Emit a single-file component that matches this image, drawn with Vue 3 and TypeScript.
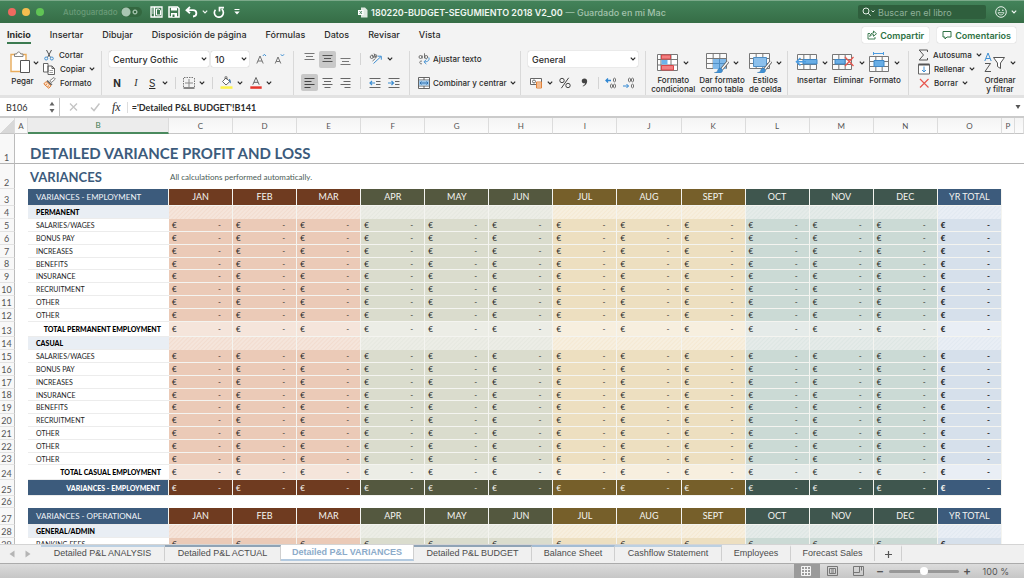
<script setup lang="ts">
import { h, ref } from 'vue'

const gridLines = (w: number, hh: number) =>
  `<path d="M.5 .5h${w}v${hh}h-${w}zM.5 ${hh / 3 + 0.5}h${w}M.5 ${(hh * 2) / 3 + 0.5}h${w}M${w / 3 + 0.5} .5v${hh}M${(w * 2) / 3 + 0.5} .5v${hh}" fill="#fbfbfb" stroke="#777"/>`
const brush =
  '<path d="M22 8.5l-6.5 8" stroke="#666" stroke-width="3" fill="none"/><path d="M22 8.5l-6.5 8" stroke="#fff" stroke-width="1.3" fill="none"/><path d="M15.5 15.5c-3-1-3.500 1-4 2.500-.4 1.200-1.500 1.500-3 1.500 3 1.500 8 1 8-2z" fill="#3f8fd2" stroke="#2b6ca8" stroke-width=".5"/>'

const icons: Record<string, [number, number, string]> = {
  layout: [13, 12, '<path d="M1 1h11v10H1zM4.500 1v10" fill="none" stroke="#fff" stroke-width="1.300"/><path d="M2.200 3h1.400M2.200 5h1.400M2.200 7h1.400" stroke="#fff"/><path d="M6.500 3h2.700l1.300 1.500V9h-4z" fill="none" stroke="#fff"/>'],
  save: [12, 12, '<path d="M1 1h8.500L11 2.500V11H1z" fill="none" stroke="#fff" stroke-width="1.500"/><path d="M3 1.500h6v3H3zM3 7h6v4H3z" fill="#fff"/><path d="M4.500 8.500h2V11h-2z" fill="#3c7850"/>'],
  undo: [13, 12, '<path d="M5 1L1.500 4.200l3.500 3M1.500 4.200H8c4.500 0 4.500 6 0 6.300" fill="none" stroke="#fff" stroke-width="1.800"/>'],
  redo: [12, 12, '<path d="M2.500 3.700A4.500 4.500 0 1 0 8.700 3.200M6.500 5.500V1.700H11" fill="none" stroke="#fff" stroke-width="1.700"/>'],
  more: [6, 8, '<path d="M.5 1.500h5" stroke="#fff"/><path d="M.3 3.500h5.400L3 6.500z" fill="#fff"/>'],
  book: [10, 11, '<path d="M3 .5h4l2.500 2.500v7.500H3z" fill="#dfe9e1"/><path d="M0 3h5.500v5H0z" fill="#fff"/><path d="M1.500 4l2.500 3M4 4L1.500 7" stroke="#3a7850" stroke-width=".8"/>'],
  search: [14, 10, '<circle cx="4" cy="4" r="3" fill="none" stroke="#e3eee6"/><path d="M6.200 6.200L8.600 8.800" stroke="#e3eee6"/><path d="M9.500 3.500l1.500 1.500 1.500-1.500" fill="none" stroke="#e3eee6"/>'],
  smile: [12, 12, '<circle cx="6" cy="6" r="5.300" fill="none" stroke="#e9f1eb"/><circle cx="4.200" cy="4.300" r=".8" fill="#e9f1eb"/><circle cx="7.800" cy="4.300" r=".8" fill="#e9f1eb"/><path d="M3 6.700c1 3 5 3 6 0z" fill="none" stroke="#e9f1eb" stroke-width=".8"/>'],
  share: [10, 10, '<path d="M3 3.500H1v5.500h7V7M2.800 6.500c.2-2.500 1.700-3.500 3.700-3.500V1l3 2.700-3 2.600V4.600c-1.500 0-2.700.4-3.700 1.900z" fill="none" stroke="#2f7245" stroke-width=".9"/>'],
  comment: [10, 10, '<path d="M1 1.500h8v5.500H5L3 9V7H1z" fill="none" stroke="#2f7245"/>'],
  paste: [21, 23, '<path d="M1 3.500h15v17H1z" fill="#fff" stroke="#e9ac5b" stroke-width="1.400"/><path d="M4.500 5.500V3h2.200c.4-2.700 3.500-2.700 4 0h2.300v2.500z" fill="#fff" stroke="#777" stroke-width=".9"/><path d="M10.500 9.500h9v12h-9z" fill="#fff" stroke="#555"/>'],
  cut: [12, 12, '<path d="M3.500 1l4 7.500M8.500 1l-4 7.500" stroke="#555" fill="none"/><circle cx="3.200" cy="9.500" r="1.500" fill="none" stroke="#3f8fd2"/><circle cx="8.800" cy="9.500" r="1.500" fill="none" stroke="#3f8fd2"/>'],
  copy: [13, 12, '<path d="M.5 .5h4.500v8.500H.5zM5 3h4l2.500 2.500v6H5zM9 3v2.500h2.500" fill="#fff" stroke="#555" stroke-width=".9"/><path d="M6.500 7.500h3.500M6.500 9.500h3.500" stroke="#777" stroke-width=".7"/>'],
  format: [13, 12, '<path d="M7 3.500l4-3 1.300 1.500-3.800 3.500z" fill="#fff" stroke="#666" stroke-width=".8"/><path d="M4.500 3l5 4.500-1.500 1L3.500 4.300z" fill="#666"/><path d="M3 4.500L.8 7l5 4.300 2.200-2.500z" fill="#fbe3cf" stroke="#e0823a"/><path d="M2.500 8l1.500-1M4.500 9.700l1.500-1" stroke="#e0823a"/>'],
  grow: [11, 12, '<path d="M.8 10.500L4 3l3.200 7.500M2 8h4" fill="none" stroke="#666" stroke-width=".9"/><path d="M6.800 3l1.600-1.700L10 3" fill="none" stroke="#3f8fd2"/>'],
  shrink: [11, 12, '<path d="M1.200 10.500L4 4l2.800 6.500M2.200 8.500h3.600" fill="none" stroke="#666" stroke-width=".9"/><path d="M6.800 1.300L8.400 3 10 1.300" fill="none" stroke="#3f8fd2"/>'],
  borders: [12, 12, '<path d="M1 .5h10M.5 1v10M11.500 1v10" stroke="#777" stroke-dasharray="1.500 1" fill="none"/><path d="M6 2v8M2 6h8" stroke="#888"/><path d="M.5 11h11" stroke="#555" stroke-width="1.400"/>'],
  fill: [13, 13, '<path d="M2.500 5.500L6 2l3.800 3.500L6 9z" fill="#fff" stroke="#555" stroke-width=".9"/><path d="M5 3V.8h2v3" fill="none" stroke="#555" stroke-width=".7"/><path d="M9 3c1.500 0 2 1.500 1.800 4.500C9.500 6.500 9 5 9 3z" fill="#3b75ad"/><path d="M.5 10.300h12v2.500H.5z" fill="#fdf34a"/>'],
  fontColor: [12, 13, '<path d="M2.800 8.700L6 1.500l3.200 7.200M4 6.300h4" fill="none" stroke="#555" stroke-width=".9"/><path d="M.3 10.300h11.400v2.500H.3z" fill="#e6352b"/>'],
  vtop: [11, 12, '<path d="M.5 .5h10M2 3.500h7M.5 6.500h10" stroke="#777"/>'],
  vmid: [11, 12, '<path d="M.5 2.500h10M2 5.500h7M.5 8.500h10" stroke="#555"/>'],
  vbot: [11, 12, '<path d="M.5 5.500h10M2 8.500h7M.5 11.500h10" stroke="#777"/>'],
  left: [11, 12, '<path d="M.5 1.500h10M.5 4.500h7M.5 7.500h10M.5 10.500h6" stroke="#444"/>'],
  center: [11, 12, '<path d="M.5 1.500h10M2 4.500h7M.5 7.500h10M2.500 10.500h6" stroke="#666"/>'],
  right: [11, 12, '<path d="M.5 1.500h10M3.500 4.500h7M.5 7.500h10M4.500 10.500h6" stroke="#666"/>'],
  orient: [14, 12, '<g fill="none" stroke="#555" stroke-width=".8"><circle cx="2.700" cy="4" r="1.500"/><path d="M3 1.500l2 3.500"/><circle cx="6.500" cy="3" r="1.400"/><path d="M5 .5l2 4M3.500 8l3-2.500"/></g><path d="M4.500 10.500L12 3.500M8.800 3.200h3.500v3.500" fill="none" stroke="#3f8fd2"/>'],
  outdent: [12, 12, '<path d="M.5 1.500h11M7 4.500h4.500M7 7.500h4.500M.5 10.500h11" stroke="#666"/><path d="M6 6H1M3 4L1 6l2 2" fill="none" stroke="#3f8fd2" stroke-width="1.200"/>'],
  indent: [12, 12, '<path d="M.5 1.500h11M7 4.500h4.500M7 7.500h4.500M.5 10.500h11" stroke="#666"/><path d="M0 6h5M3.500 4l2 2-2 2" fill="none" stroke="#3f8fd2" stroke-width="1.200"/>'],
  wrap: [12, 12, '<g fill="none" stroke="#555" stroke-width=".8"><circle cx="2.500" cy="4" r="1.500"/><path d="M4.200 2.500v3M6.500 .3v5"/><circle cx="8.200" cy="4" r="1.500"/><path d="M4 8.200c-3-1-3 3.500 0 2.500"/></g><path d="M10.800 4.500c1 3-1 4.300-4.300 4.300M8.300 6.500L6 8.800 8.300 11" fill="none" stroke="#3f8fd2"/>'],
  merge: [12, 12, '<path d="M.5 .5h11v11H.5zM.5 3h11M.5 9h11M6 .5V3M6 9v2.500" fill="#fff" stroke="#555" stroke-width=".9"/><path d="M1 3.500h10v5H1z" fill="#9cc8ee"/><path d="M2 6h8M3.500 4.500L2 6l1.500 1.500M8.500 4.500L10 6 8.500 7.500" fill="none" stroke="#2b6ca8" stroke-width=".9"/>'],
  currency: [13, 12, '<path d="M.5 1.500h11v6H.5z" fill="#fff" stroke="#666"/><circle cx="4" cy="4.500" r="1.500" fill="none" stroke="#666"/><path d="M6.500 5h5v6h-5z" fill="#fde3cb" stroke="#e0823a"/><path d="M6.500 7h5M6.500 9h5" stroke="#e0823a" stroke-width=".8"/>'],
  percent: [12, 12, '<g fill="none" stroke="#444"><circle cx="3" cy="3.500" r="2.200"/><circle cx="9" cy="8.500" r="2.200"/><path d="M9.700 .8L2.300 11.200"/></g>'],
  comma: [7, 12, '<path d="M3.500 1.500c4 0 3.500 6-1.500 8l-.4-.6C3.400 8 4 7.200 4 6.300 0 7-.5 1.500 3.500 1.500z" fill="#444"/>'],
  decInc: [12, 12, '<path d="M6 3.500H1M3 1.500l-2 2 2 2" fill="none" stroke="#2f86d2" stroke-width="1.300"/><g fill="none" stroke="#555" stroke-width=".8"><ellipse cx="9.500" cy="3" rx="1.100" ry="1.900"/><ellipse cx="6.500" cy="9" rx="1.100" ry="1.900"/><ellipse cx="9.500" cy="9" rx="1.100" ry="1.900"/></g>'],
  decDec: [12, 12, '<path d="M0 9h5.500M3.500 7l2 2-2 2" fill="none" stroke="#2f86d2" stroke-width="1"/><g fill="none" stroke="#555" stroke-width=".8"><ellipse cx="6.500" cy="3" rx="1.100" ry="1.900"/><ellipse cx="9.500" cy="3" rx="1.100" ry="1.900"/><ellipse cx="9.500" cy="9" rx="1.100" ry="1.900"/></g>'],
  cond: [22, 20, '<path d="M.5 1.500h20v16H.5zM.5 6.500h20M.5 12h20M4 1.500v16M14 1.500v16" fill="#fff" stroke="#777"/><path d="M4.500 2h9v4h-9zM4.500 12.500h12v4.500h-12z" fill="#f27f80" stroke="#d9484a"/><path d="M4.500 7h6v4.500h-6z" fill="#6db3ea"/>'],
  table: [23, 20, gridLines(20, 15) + '<path d="M7 6h13v10H7z" fill="#7fb9ea"/><path d="M7 10.500h13M13.500 6v10" stroke="#4f8ec4"/>' + brush],
  styles: [23, 20, gridLines(20, 15) + '<path d="M4.500 4.500h13v9h-13z" fill="#8cc0ec" stroke="#4f8ec4"/>' + brush],
  insert: [23, 20, '<g transform="translate(2 1)">' + gridLines(19, 15) + '</g><path d="M8 6.500h14v4.500H8z" fill="#69aee6" stroke="#3f86c4"/><path d="M11 8.700H1.500M5.500 5l-4 3.700 4 3.700" fill="none" stroke="#4b9be0" stroke-width="1.500"/>'],
  remove: [23, 20, '<g transform="translate(0 1)">' + gridLines(19, 15) + '</g><path d="M3 6.500h10v4.500H3z" fill="#69aee6" stroke="#3f86c4"/><path d="M13 4l8.500 9M21.500 4L13 13" stroke="#e8574f" stroke-width="1.300"/>'],
  formatCell: [21, 21, '<g transform="translate(0 4)">' + gridLines(19, 15) + '</g><path d="M5 8.500h10v6H5z" fill="#69aee6" stroke="#3f86c4"/><path d="M4.500 1.500h10M4.500 0v3M14.500 0v3" stroke="#4b9be0"/>'],
  sigma: [11, 12, '<path d="M9.500 3V1H1.200L5.500 6l-4.300 5h8.300V9" fill="none" stroke="#555"/>'],
  fillDown: [12, 12, '<path d="M.5 1.500h11v9.500H.5z" fill="#fff" stroke="#666"/><path d="M.5 1.500h11" stroke="#555" stroke-width="2"/><path d="M6 3.500v5.500M4 7l2 2 2-2" fill="none" stroke="#3f8fd2"/>'],
  clear: [12, 12, '<path d="M2 2l8.500 8.500M10.500 2L2 10.500" stroke="#e8574f" stroke-width="1.200"/>'],
  sort: [22, 21, '<path d="M.8 9L4 1l3.200 8M2 6.500h4" fill="none" stroke="#3f8fd2"/><path d="M1 11.500h5.500L1 19.500h6" fill="none" stroke="#555"/><path d="M9.500 5.500h11l-4 5.500v5.500l-3-2V11z" fill="#fff" stroke="#555"/>'],
  cancel: [9, 10, '<path d="M1 1.500l7 7M8 1.500l-7 7" stroke="#c4c4c4" stroke-width="1.300"/>'],
  accept: [10, 10, '<path d="M1 5.500l3 3 5.500-7" fill="none" stroke="#c4c4c4" stroke-width="1.500"/>'],
  step: [6, 12, '<path d="M.5 4.500L3 .8l2.500 3.700zM.5 8L3 11.700 5.500 8z" fill="#666"/>'],
  down: [6, 6, '<path d="M.5 1h5L3 5z" fill="#555"/>'],
  prev: [6, 8, '<path d="M5.500 .5v7L.5 4z" fill="#b4b4b4"/>'],
  next: [6, 8, '<path d="M.5 .5v7L5.500 4z" fill="#b4b4b4"/>'],
  plus: [9, 9, '<path d="M4.500 1v7M1 4.500h7" stroke="#555" stroke-width="1.200"/>'],
  viewGrid: [11, 10, '<path d="M.5 .5h9v9h-9zM.5 3.500h9M.5 6.500h9M3.500 .5v9M6.500 .5v9" fill="none" stroke="#f4f4f4"/>'],
  viewPage: [11, 10, '<path d="M.5 .5h10v9H.5z" fill="none" stroke="#777"/><path d="M2.500 2.500h6v5h-6z" fill="none" stroke="#777"/><path d="M4 4h3M4 6h3" stroke="#777"/>'],
  viewBreak: [11, 10, '<path d="M.5 .5h10v9H.5zM.5 6.500h6v-6M8.500 .5v4" fill="none" stroke="#777"/>'],
  chev: [6, 6, '<path d="M.8 1.700L3 4l2.200-2.300" fill="none" stroke="currentColor" stroke-width="1.200"/>'],
}

const Icon = (p: { name: string }) => {
  const [w, hh, body] = icons[p.name]
  return h('svg', { class: 'icon', width: w, height: hh, viewBox: `0 0 ${w} ${hh}`, 'aria-hidden': 'true', innerHTML: body })
}
Icon.props = ['name']

const menus = ['Inicio', 'Insertar', 'Dibujar', 'Disposición de página', 'Fórmulas', 'Datos', 'Revisar', 'Vista']

interface Month { letter: string; name: string; tone: string }
const months: Month[] = [
  ['C', 'JAN', 'q1'], ['D', 'FEB', 'q1'], ['E', 'MAR', 'q1'],
  ['F', 'APR', 'q2'], ['G', 'MAY', 'q2'], ['H', 'JUN', 'q2'],
  ['I', 'JUL', 'q3'], ['J', 'AUG', 'q3'], ['K', 'SEPT', 'q3'],
  ['L', 'OCT', 'q4'], ['M', 'NOV', 'q4'], ['N', 'DEC', 'q4'],
  ['O', 'YR TOTAL', 'yr'],
].map(([letter, name, tone]) => ({ letter, name, tone }))

type Kind = 'head' | 'section' | 'item' | 'item short' | 'total' | 'grand' | 'blank'
const rows: { n: number; kind: Kind; label: string }[] = (
  [
    ['head', 'VARIANCES - EMPLOYMENT'],
    ['section', 'PERMANENT'],
    ['item', 'SALARIES/WAGES'], ['item', 'BONUS PAY'], ['item', 'INCREASES'], ['item short', 'BENEFITS'],
    ['item', 'INSURANCE'], ['item', 'RECRUITMENT'], ['item', 'OTHER'], ['item', 'OTHER'],
    ['total', 'TOTAL PERMANENT EMPLOYMENT'],
    ['section', 'CASUAL'],
    ['item', 'SALARIES/WAGES'], ['item', 'BONUS PAY'], ['item', 'INCREASES'], ['item short', 'INSURANCE'],
    ['item', 'BENEFITS'], ['item', 'RECRUITMENT'], ['item', 'OTHER'], ['item', 'OTHER'], ['item short', 'OTHER'],
    ['total', 'TOTAL CASUAL EMPLOYMENT'],
    ['grand', 'VARIANCES - EMPLOYMENT'],
    ['blank', ''],
    ['head', 'VARIANCES - OPERATIONAL'],
    ['section', 'GENERAL/ADMIN'],
    ['item', 'BANKING FEES'],
  ] as [Kind, string][]
).map(([kind, label], i) => ({ n: i + 3, kind, label }))

const hasValue = (kind: Kind) => kind.startsWith('item') || kind === 'total' || kind === 'grand'

const sheets = [
  { name: 'Detailed P&L ANALYSIS', tone: 'pastel', w: 124 },
  { name: 'Detailed P&L ACTUAL', tone: 'slate', w: 116 },
  { name: 'Detailed P&L VARIANCES', tone: 'active', w: 133 },
  { name: 'Detailed P&L BUDGET', tone: 'slate', w: 118 },
  { name: 'Balance Sheet', tone: 'mid', w: 83 },
  { name: 'Cashflow Statement', tone: 'pastel', w: 107 },
  { name: 'Employees', tone: 'plain', w: 69 },
  { name: 'Forecast Sales', tone: 'plain', w: 84 },
]

const zoom = ref(50)
const formula = ref("='Detailed P&L BUDGET'!B141")
const cell = ref('B106')
</script>

<template>
  <div class="window">
    <header class="titlebar">
      <div class="title-left">
        <button class="light red" aria-label="Cerrar"></button>
        <button class="light amber" aria-label="Minimizar"></button>
        <button class="light green" aria-label="Ampliar"></button>
        <label class="autosave">Autoguardado <input type="checkbox" /></label>
        <div class="quick">
          <button aria-label="Plantillas"><Icon name="layout" /></button>
          <button aria-label="Guardar"><Icon name="save" /></button>
          <button class="pair" aria-label="Deshacer"><Icon name="undo" /><Icon name="chev" /></button>
          <button aria-label="Rehacer"><Icon name="redo" /></button>
          <button class="customize" aria-label="Personalizar"><Icon name="more" /></button>
        </div>
      </div>
      <div class="doc-name"><Icon name="book" /><span>180220-BUDGET-SEGUMIENTO 2018 V2_00</span><small>— Guardado en mi Mac</small></div>
      <div class="title-right">
        <label class="search"><Icon name="search" /><input type="text" placeholder="Buscar en el libro" aria-label="Buscar en el libro" /></label>
        <button class="pair" aria-label="Comentarios del producto"><Icon name="smile" /><Icon name="chev" /></button>
      </div>
    </header>

    <nav class="menu">
      <button v-for="(m, i) in menus" :key="m" :class="{ current: i === 0 }">{{ m }}</button>
      <div class="menu-actions">
        <button><Icon name="share" />Compartir</button>
        <button><Icon name="comment" />Comentarios</button>
      </div>
    </nav>

    <section class="ribbon">
      <div class="group clipboard">
        <div class="paste">
          <button class="pair" aria-label="Pegar"><Icon name="paste" /><Icon name="chev" /></button>
          <span>Pegar</span>
        </div>
        <div class="stack">
          <button><Icon name="cut" />Cortar</button>
          <button><Icon name="copy" />Copiar <Icon name="chev" /></button>
          <button><Icon name="format" />Formato</button>
        </div>
      </div>

      <div class="group two-rows">
        <div class="line fonts">
          <span class="drop wide"><select aria-label="Fuente"><option>Century Gothic</option></select><Icon name="chev" /></span>
          <span class="drop size"><select aria-label="Tamaño"><option>10</option></select><Icon name="chev" /></span>
          <button class="grow" aria-label="Aumentar tamaño"><Icon name="grow" /></button>
          <button class="grow" aria-label="Reducir tamaño"><Icon name="shrink" /></button>
        </div>
        <div class="line emphasis">
          <button class="letter"><b>N</b></button>
          <button class="letter"><i>I</i></button>
          <button class="letter pair"><u>S</u><Icon name="chev" /></button>
          <span class="rule"></span>
          <button class="pair" aria-label="Bordes"><Icon name="borders" /><Icon name="chev" /></button>
          <span class="rule"></span>
          <button class="pair" aria-label="Color de relleno"><Icon name="fill" /><Icon name="chev" /></button>
          <button class="pair" aria-label="Color de fuente"><Icon name="fontColor" /><Icon name="chev" /></button>
        </div>
      </div>

      <div class="group two-rows">
        <div class="line align">
          <button class="cellbtn" aria-label="Arriba"><Icon name="vtop" /></button>
          <button class="cellbtn on" aria-label="Medio"><Icon name="vmid" /></button>
          <button class="cellbtn" aria-label="Abajo"><Icon name="vbot" /></button>
          <span class="rule"></span>
          <button class="pair" aria-label="Orientación"><Icon name="orient" /><Icon name="chev" /></button>
        </div>
        <div class="line align">
          <button class="cellbtn on" aria-label="Izquierda"><Icon name="left" /></button>
          <button class="cellbtn" aria-label="Centro"><Icon name="center" /></button>
          <button class="cellbtn" aria-label="Derecha"><Icon name="right" /></button>
          <span class="rule"></span>
          <button aria-label="Reducir sangría"><Icon name="outdent" /></button>
          <button class="indent" aria-label="Aumentar sangría"><Icon name="indent" /></button>
        </div>
      </div>

      <div class="group two-rows">
        <div class="line text"><button><Icon name="wrap" />Ajustar texto</button></div>
        <div class="line text"><button><Icon name="merge" />Combinar y centrar <Icon name="chev" /></button></div>
      </div>

      <div class="group two-rows number">
        <div class="line"><span class="drop full"><select aria-label="Formato de número"><option>General</option></select><Icon name="chev" /></span></div>
        <div class="line numbers">
          <button class="pair" aria-label="Moneda"><Icon name="currency" /><Icon name="chev" /></button>
          <button aria-label="Porcentaje"><Icon name="percent" /></button>
          <button class="comma" aria-label="Millares"><Icon name="comma" /></button>
          <span class="rule"></span>
          <button aria-label="Aumentar decimales"><Icon name="decInc" /></button>
          <button aria-label="Disminuir decimales"><Icon name="decDec" /></button>
        </div>
      </div>

      <div class="group tiles">
        <button><span class="pair"><Icon name="cond" /><Icon name="chev" /></span>Formato<br />condicional</button>
        <button><span class="pair"><Icon name="table" /><Icon name="chev" /></span>Dar formato<br />como tabla</button>
        <button><span class="pair"><Icon name="styles" /><Icon name="chev" /></span>Estilos<br />de celda</button>
      </div>

      <div class="group tiles">
        <button><span class="pair"><Icon name="insert" /><Icon name="chev" /></span>Insertar</button>
        <button><span class="pair"><Icon name="remove" /><Icon name="chev" /></span>Eliminar</button>
        <button><span class="pair"><Icon name="formatCell" /><Icon name="chev" /></span>Formato</button>
      </div>

      <div class="group editing">
        <div class="stack">
          <button><Icon name="sigma" />Autosuma <Icon name="chev" /></button>
          <button><Icon name="fillDown" />Rellenar <Icon name="chev" /></button>
          <button><Icon name="clear" />Borrar <Icon name="chev" /></button>
        </div>
        <div class="tiles">
          <button><span class="pair"><Icon name="sort" /><Icon name="chev" /></span>Ordenar<br />y filtrar</button>
        </div>
      </div>
    </section>

    <div class="formula-bar">
      <div class="name-box"><input v-model="cell" type="text" aria-label="Cuadro de nombres" /><Icon name="step" /></div>
      <button aria-label="Cancelar"><Icon name="cancel" /></button>
      <button aria-label="Aceptar"><Icon name="accept" /></button>
      <button class="fx">fx</button>
      <input v-model="formula" class="formula" type="text" aria-label="Fórmula" />
      <button class="expand" aria-label="Expandir"><Icon name="down" /></button>
    </div>

    <main class="sheet">
      <table>
        <colgroup>
          <col class="c-num" /><col class="c-a" /><col class="c-b" />
          <col v-for="m in months" :key="m.letter" />
          <col class="c-a" /><col class="c-end" />
        </colgroup>
        <thead>
          <tr>
            <th class="corner"></th><th>A</th><th class="picked">B</th>
            <th v-for="m in months" :key="m.letter">{{ m.letter }}</th>
            <th>P</th><th></th>
          </tr>
        </thead>
        <tbody>
          <tr class="r-title">
            <th class="num">1</th><td></td><td class="title" colspan="16">DETAILED VARIANCE PROFIT AND LOSS</td>
          </tr>
          <tr class="r-sub">
            <th class="num">2</th><td></td><td class="subtitle">VARIANCES</td>
            <td class="note" colspan="15">All calculations performed automatically.</td>
          </tr>
          <tr v-for="r in rows" :key="r.n" :class="r.kind">
            <th class="num">{{ r.n }}</th>
            <td></td>
            <td class="label">{{ r.label }}</td>
            <td v-for="m in months" :key="m.letter" class="val" :class="m.tone">
              <template v-if="r.kind === 'head'">{{ m.name }}</template>
              <div v-else-if="hasValue(r.kind)" class="money"><span>€</span><span>-</span></div>
            </td>
            <td></td><td></td>
          </tr>
        </tbody>
      </table>
    </main>

    <nav class="tabs">
      <div class="arrows">
        <button aria-label="Anterior"><Icon name="prev" /></button>
        <button aria-label="Siguiente"><Icon name="next" /></button>
      </div>
      <button v-for="s in sheets" :key="s.name" class="tab" :class="s.tone" :style="{ flexBasis: s.w + 'px' }">{{ s.name }}</button>
      <button class="tab add" aria-label="Nueva hoja"><Icon name="plus" /></button>
    </nav>

    <footer class="status">
      <button class="view on" aria-label="Normal"><Icon name="viewGrid" /></button>
      <button class="view" aria-label="Diseño de página"><Icon name="viewPage" /></button>
      <button class="view" aria-label="Saltos de página"><Icon name="viewBreak" /></button>
      <button class="sign" aria-label="Alejar">−</button>
      <input v-model="zoom" type="range" min="0" max="100" aria-label="Zoom" />
      <button class="sign" aria-label="Acercar">+</button>
      <span class="percent">100 %</span>
    </footer>
  </div>
</template>

<style>
body {
  margin: 0;
}
</style>

<style scoped>
* {
  box-sizing: border-box;
}
.window {
  height: 100vh;
  display: flex;
  flex-direction: column;
  overflow: hidden;
  background: #f3f3f3;
  color: #2b2b2b;
  font-family: Inter, "Liberation Sans", sans-serif;
  font-size: 8px;
}
button,
input,
select {
  font: inherit;
  color: inherit;
  background: none;
  border: 0;
  padding: 0;
  margin: 0;
  outline: 0;
}
button {
  display: flex;
  align-items: center;
  justify-content: center;
  white-space: nowrap;
}
.icon {
  display: block;
  flex: none;
}
.pair {
  display: flex;
  align-items: center;
  gap: 4px;
}

/* title bar */
.titlebar {
  flex: none;
  height: 23px;
  display: grid;
  grid-template-columns: 1fr auto 1fr;
  align-items: center;
  background: linear-gradient(#43835a, #366d46);
  border-top: 1px solid #7ca98a;
  color: #f0f6f1;
}
.title-left {
  display: flex;
  align-items: center;
  gap: 6px;
  padding-left: 8px;
}
.light {
  width: 8px;
  height: 8px;
  border-radius: 50%;
}
.red { background: #ee6a5f; }
.amber { background: #f5bd4f; }
.green { background: #61c455; }
.autosave {
  display: flex;
  align-items: center;
  gap: 4px;
  margin-left: 13px;
  color: #6a9b78;
  font-size: 8px;
  font-weight: 500;
}
.autosave input {
  appearance: none;
  width: 21px;
  height: 10px;
  border-radius: 5px;
  background: radial-gradient(circle at 5px 5px, #a9c6b2 4px, transparent 5px),
    radial-gradient(circle at 14px 5px, #33673f 1px, #9cbca5 1px, #9cbca5 2px, #33673f 3px);
}
.quick {
  display: flex;
  align-items: center;
  gap: 5px;
  margin-left: 2px;
}
.customize {
  margin-left: 4px;
}
.doc-name {
  display: flex;
  align-items: center;
  gap: 3px;
  font-size: 9px;
  font-weight: 500;
}
.doc-name span {
  font-weight: 600;
}
.doc-name small {
  font-size: 9px;
  color: #a3c3ad;
}
.title-right {
  display: flex;
  justify-content: flex-end;
  align-items: center;
  gap: 9px;
  padding-right: 7px;
}
.search {
  display: flex;
  align-items: center;
  gap: 2px;
  width: 128px;
  height: 14px;
  padding: 0 4px;
  border-radius: 2px;
  background: #2f5f3d;
}
.search input {
  width: 100%;
  font-size: 9px;
}
.search input::placeholder {
  color: #8fb19a;
  opacity: 1;
}

/* menu */
.menu {
  flex: none;
  height: 24px;
  display: flex;
  align-items: center;
  gap: 19px;
  padding: 0 8px 0 7px;
  font-size: 9px;
  font-weight: 500;
}
.menu > button {
  height: 18px;
  border-bottom: 2px solid transparent;
}
.menu > .current {
  font-weight: 700;
  border-color: #3b7a50;
}
.menu-actions {
  display: flex;
  gap: 8px;
  margin-left: auto;
}
.menu-actions button {
  height: 16px;
  gap: 3px;
  padding: 0 5px;
  border-radius: 2px;
  background: #fff;
  box-shadow: 0 0 1px #aaa;
  color: #2f7245;
  font-weight: 600;
}

/* ribbon */
.ribbon {
  flex: none;
  height: 48px;
  display: grid;
  grid-template-columns: 102fr 192fr 116fr 111fr 125fr 142fr 121fr 115fr;
  padding-top: 4px;
  font-weight: 500;
}
.group {
  min-width: 0;
  border-right: 1px solid #d9d9d9;
}
.group:last-child {
  border-right: 0;
}
.clipboard {
  display: flex;
  gap: 4px;
  padding-left: 10px;
}
.paste {
  display: flex;
  flex-direction: column;
  gap: 2px;
}
.paste .pair {
  gap: 2px;
}
.paste span {
  width: 25px;
  text-align: center;
  line-height: 10px;
}
.stack {
  display: flex;
  flex-direction: column;
  margin-top: -3px;
}
.stack button {
  height: 14px;
  gap: 4px;
  justify-content: flex-start;
}
.two-rows {
  display: grid;
  grid-template-rows: 16px 17px;
  row-gap: 7px;
  align-content: start;
}
.line {
  display: flex;
  align-items: center;
}
.drop {
  position: relative;
  height: 16px;
}
.drop select {
  appearance: none;
  width: 100%;
  height: 16px;
  padding: 0 4px;
  background: #fff;
  border-radius: 2px;
  box-shadow: 0 0 1px #999;
  font-size: 9px;
}
.drop .icon {
  position: absolute;
  right: 2px;
  top: 5px;
}
.wide { width: 100px; }
.size { width: 38px; }
.full { width: 110px; }
.fonts {
  gap: 2px;
  padding-left: 7px;
}
.grow {
  margin-left: 5px;
}
.emphasis {
  gap: 7px;
  padding-left: 9px;
}
.letter {
  min-width: 12px;
  font-size: 10px;
}
.letter i {
  font-family: "Liberation Serif", serif;
}
.letter u {
  font-weight: 400;
}
.letter.pair {
  gap: 7px;
}
.rule {
  width: 1px;
  height: 12px;
  background: #d4d4d4;
}
.align {
  gap: 1px;
  padding-left: 7px;
}
.align .rule {
  margin: 0 7px 0 5px;
}
.indent {
  margin-left: 6px;
}
.cellbtn {
  width: 17px;
  height: 17px;
  border-radius: 2px;
}
.cellbtn.on {
  background: #c9c9c9;
}
.text {
  padding-left: 8px;
}
.text button {
  gap: 3px;
}
.number {
  padding-left: 7px;
}
.numbers {
  gap: 6px;
  padding-left: 2px;
}
.comma {
  margin: 0 4px;
}
.tiles {
  display: flex;
  justify-content: center;
  gap: 4px;
}
.tiles button {
  flex-direction: column;
  justify-content: flex-start;
  line-height: 9px;
}
.tiles .pair {
  height: 23px;
  margin-bottom: 2px;
}
.editing {
  display: flex;
  justify-content: space-between;
  padding: 0 8px 0 9px;
}

/* formula bar */
.formula-bar {
  flex: none;
  height: 23px;
  display: flex;
  align-items: center;
  gap: 12px;
  background: #fff;
  border-top: 3px solid #e2e2e2;
  border-bottom: 2px solid #cbcbcb;
  padding-right: 3px;
}
.name-box {
  display: flex;
  align-items: center;
  width: 60px;
  height: 18px;
  padding: 0 4px 0 6px;
  border-right: 1px solid #c4c4c4;
  font-family: Lato, sans-serif;
  font-size: 9px;
}
.name-box input {
  width: 100%;
}
.formula-bar button:nth-of-type(1) {
  margin-left: -3px;
}
.fx {
  font: italic 12px "Liberation Serif", serif;
}
.formula {
  flex: 1;
  padding-left: 4px;
  margin-left: -6px;
  border-left: 1px solid #ddd;
  font-family: Lato, sans-serif;
  font-size: 9px;
  font-weight: 700;
}

/* sheet */
.sheet {
  flex: 1;
  min-height: 0;
  overflow: hidden;
  background: #fff;
  font-family: Lato, sans-serif;
}
table {
  width: 100%;
  table-layout: fixed;
  border-collapse: separate;
  border-spacing: 0;
  line-height: 10px;
}
th,
td {
  padding: 0;
  white-space: nowrap;
}
.c-num { width: 15px; }
.c-a { width: 13px; }
.c-b { width: 141px; }
.c-end { width: 9px; }
thead th {
  height: 16px;
  font-size: 8px;
  font-weight: 400;
  color: #555;
  background: linear-gradient(#f4f4f4, #fcfcfc);
  border-right: 1px solid #dcdcdc;
  border-bottom: 1px solid #c6c6c6;
}
thead .picked {
  background: #ececec;
  color: #3b7a50;
  border-bottom: 2px solid #4a8a5e;
}
thead .corner {
  background: linear-gradient(135deg, #f6f6f6 55%, #d8d8d8 55%);
}
.num {
  padding-right: 1px;
  background: #f8f8f8;
  border-right: 1px solid #bcbcbc;
  border-bottom: 1px solid #e2e2e2;
  vertical-align: bottom;
  font-size: 9px;
  font-weight: 400;
  color: #555;
}
.r-title > * {
  height: 30px;
  border-bottom: 1px solid #b4b4b4;
}
.r-sub > * {
  height: 25px;
}
.title {
  padding: 9px 0 0 2px;
  font-size: 15px;
  line-height: 20px;
  font-weight: 700;
  color: #3c5b7c;
}
.subtitle {
  padding-left: 2px;
  font-size: 13px;
  line-height: 16px;
  font-weight: 700;
  color: #3c5b7c;
}
.note {
  padding-left: 1px;
  color: #4a5b55;
}
.label {
  padding: 0 8px;
  color: #1c1c1c;
  font-size: 7px;
  border-bottom: 1px solid #ececec;
}
.val {
  border-right: 1px solid #f4f4f0;
  border-bottom: 1px solid #f4f4f0;
}
.money {
  display: flex;
  justify-content: space-between;
  padding: 0 11px 0 3px;
}
.yr .money {
  font-weight: 900;
}
.item > * { height: 13px; }
.short > * { height: 12px; }
.section > * { height: 13px; }
.total > * { height: 15px; }
.grand > * { height: 16px; }
.blank > * { height: 12px; }
.head > * { height: 17px; }

.q1 { --dark: #6f3b20; --mid: #ebcab7; --pale: #f5e5db; --line: #f2dccf; }
.q2 { --dark: #54583f; --mid: #dadccd; --pale: #ecede6; --line: #e6e8e0; }
.q3 { --dark: #765f2a; --mid: #eddfc0; --pale: #f7efdf; --line: #f5e9d3; }
.q4 { --dark: #3f564e; --mid: #cbdad5; --pale: #e5ebe9; --line: #dde6e3; }
.yr { --dark: #3c5b7c; --mid: #d6e0eb; --pale: #e9eef5; --line: #e2e9f1; }

.item .val { background: var(--mid); }
.total .val { background: var(--pale); }
.section .val {
  background: repeating-linear-gradient(135deg, var(--pale) 0 1px, var(--line) 2px 2px, var(--pale) 3px 3px);
  border-bottom: 0;
}
.head .val,
.grand .val {
  background: var(--dark);
  color: #f4f4f0;
}
.head .val {
  text-align: center;
  font-size: 9px;
}
.head .label {
  background: #3c5b7c;
  color: #f1f4f8;
  font-size: 8px;
  border-right: 1px solid #f4f4f0;
}
.section .label {
  background: #e9eef4;
  color: #000;
  font-weight: 900;
}
.total .label,
.grand .label {
  text-align: right;
  font-weight: 900;
  color: #000;
}
.grand .label {
  background: #3c5b7c;
  color: #fff;
  border-right: 1px solid #f4f4f0;
}
.blank .val,
.blank .label {
  border: 0;
}

/* sheet tabs */
.tabs {
  flex: none;
  height: 20px;
  display: flex;
  align-items: flex-start;
  background: #f0f0f0;
  border-top: 1px solid #d4d4d4;
  border-bottom: 1px solid #ababab;
  font-family: "Liberation Sans", Arial, sans-serif;
  font-size: 9px;
  color: #4c4c4c;
}
.arrows {
  display: flex;
  gap: 10px;
  width: 41px;
  height: 18px;
  padding-left: 9px;
}
.tab {
  flex: 0 1 auto;
  height: 16px;
  padding-bottom: 3px;
  border-top: 2px solid transparent;
  border-right: 1px solid #cfcfcf;
}
.pastel { border-top-color: #bcd0e2; }
.slate { border-top-color: #8fa3b6; }
.mid { border-top-color: #a3bcd4; }
.active {
  padding-bottom: 0;
  background: #fff;
  color: #8cabca;
  font-weight: 700;
  border-top: 0;
  border-bottom: 2px solid #b3cae0;
}
.add {
  width: 27px;
  padding-bottom: 0;
}

/* status bar */
.status {
  flex: none;
  height: 14px;
  display: flex;
  align-items: center;
  justify-content: flex-end;
  padding-right: 15px;
  background: linear-gradient(#dcdcdc, #c6c6c6);
  color: #555;
}
.view {
  width: 26px;
  height: 14px;
}
.view.on {
  background: #9b9b9b;
}
.sign {
  width: 17px;
  font-size: 12px;
  line-height: 12px;
  font-weight: 600;
}
.status input {
  appearance: none;
  width: 70px;
  height: 3px;
  border-radius: 2px;
  background: #989898;
}
.status input::-webkit-slider-thumb {
  appearance: none;
  width: 8px;
  height: 8px;
  border-radius: 50%;
  background: #fff;
}
.percent {
  margin-left: 7px;
  font-size: 9px;
}
</style>
